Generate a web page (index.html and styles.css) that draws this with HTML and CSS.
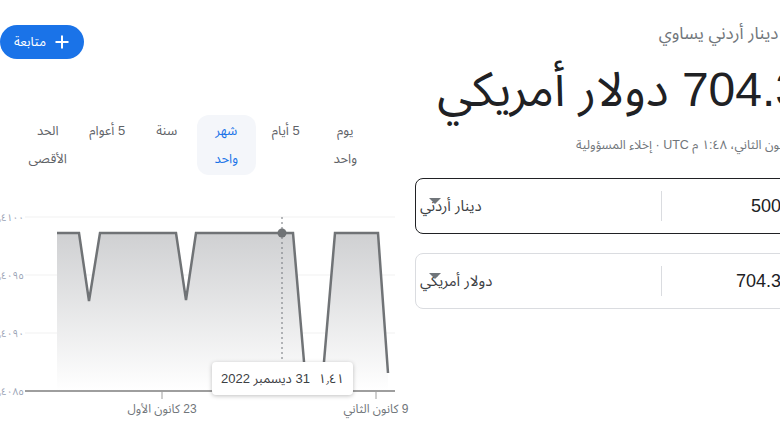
FILE: index.html
```html
<!DOCTYPE html>
<html lang="ar">
    <head>
        <meta charset="utf-8" />
        <title>محوّل العملات</title>
        <meta name="viewport" content="width=device-width, initial-scale=1" />
        <link rel="stylesheet" href="styles.css">
    </head>
    <body>
        <div class="page">
            <section class="chart_col">
                <button class="follow">
                    <svg width="16" height="16" viewBox="0 0 16 16"><path d="M8 1.5v13M1.5 8h13" stroke="#fff" stroke-width="2" fill="none"/></svg>
                    <span>متابعة</span>
                </button>

                <div class="ranges">
                    <div class="range">يوم واحد</div>
                    <div class="range">5 أيام</div>
                    <div class="range range_on">شهر واحد</div>
                    <div class="range">سنة</div>
                    <div class="range">5 أعوام</div>
                    <div class="range">الحد الأقصى</div>
                </div>

                <div class="chart">
                    <svg class="plot" width="400" height="237" viewBox="0 0 400 237">
                        <defs>
                            <linearGradient id="area" x1="0" y1="0" x2="0" y2="1">
                                <stop offset="0" stop-color="#cfd0d2"/>
                                <stop offset="1" stop-color="#ffffff"/>
                            </linearGradient>
                        </defs>
                        <!-- grid -->
                        <line class="grid" x1="25" y1="22" x2="395" y2="22"/>
                        <line class="grid" x1="25" y1="80" x2="395" y2="80"/>
                        <line class="grid" x1="25" y1="138" x2="395" y2="138"/>
                        <text class="ylab" x="24" y="25.5">١٫٤١٠٠</text>
                        <text class="ylab" x="24" y="83.5">١٫٤٠٩٥</text>
                        <text class="ylab" x="24" y="141.5">١٫٤٠٩٠</text>
                        <text class="ylab" x="24" y="199.5">١٫٤٠٨٥</text>

                        <!-- price -->
                        <path class="fill" d="M57 38 L79 38 L89 106 L100 38 L176 38 L186 105 L196 38 L293 38 L306 190 L322 190 L335 38 L378 38 L388 178 L388 196 L57 196 Z"/>
                        <path class="price" d="M57 38 L79 38 L89 106 L100 38 L176 38 L186 105 L196 38 L293 38 L306 190 L322 190 L335 38 L378 38 L388 178"/>

                        <line class="axis" x1="25" y1="196" x2="395" y2="196"/>
                        <line class="tick" x1="162" y1="196" x2="162" y2="204"/>
                        <line class="tick" x1="376" y1="196" x2="376" y2="204"/>
                        <text class="xlab" x="162" y="218">23 كانون الأول</text>
                        <text class="xlab" x="376" y="218">9 كانون الثاني</text>

                        <!-- hover -->
                        <line class="cursor" x1="282" y1="22" x2="282" y2="167"/>
                        <circle class="dot" cx="282" cy="38" r="4.5"/>
                    </svg>
                    <div class="tip"><span>١٫٤١</span><span>31 ديسمبر 2022</span></div>
                </div>
            </section>

            <section class="conv">
                <div class="from_label">50 دينار أردني يساوي</div>
                <div class="result">704.3 دولار أمريكي</div>
                <div class="stamp">9 كانون الثاني، ١:٤٨ م UTC · <span class="note">إخلاء المسؤولية</span></div>

                <div class="field field_on">
                    <div class="amount">500</div>
                    <div class="sep"></div>
                    <div class="pick">دينار أردني<span class="caret"></span></div>
                </div>
                <div class="field">
                    <div class="amount">704.3</div>
                    <div class="sep"></div>
                    <div class="pick">دولار أمريكي<span class="caret"></span></div>
                </div>
            </section>
        </div>
    </body>
</html>
```

FILE: styles.css
```css
body {
    margin: 0;
    overflow: hidden;
    background: #fff;
    font-family: "Liberation Sans", "Noto Sans Arabic", "Noto Naskh Arabic", "DejaVu Sans", sans-serif;
    color: #202124;
}
.page {
    display: flex;
    gap: 15px;
    width: 802px;
}
.chart_col {
    width: 400px;
    flex: none;
    padding-top: 25px;
}
.follow {
    display: flex;
    align-items: center;
    direction: rtl;
    gap: 8px;
    height: 34px;
    padding: 0 14px 0 14px;
    border: none;
    border-radius: 17px;
    background: #1a73e8;
    color: #fff;
    font-family: inherit;
    font-size: 13px;
}
.ranges {
    display: flex;
    direction: rtl;
    width: 357px;
    margin: 56px 0 0 18px;
}
.range {
    width: 59.5px;
    box-sizing: border-box;
    padding: 2px 9px;
    border-radius: 12px;
    text-align: center;
    font-size: 13px;
    line-height: 28px;
    color: #5f6368;
}
.range_on {
    background: #f4f6fa;
    color: #1a73e8;
}
.chart {
    position: relative;
    margin-top: 20px;
}
.plot {
    display: block;
    overflow: visible;
}
.grid {
    stroke: #f1f1f1;
    stroke-width: 1;
}
.axis {
    stroke: #9e9e9e;
    stroke-width: 2;
}
.tick {
    stroke: #9e9e9e;
    stroke-width: 1;
}
.ylab {
    font-size: 10px;
    fill: #9aa3b5;
    text-anchor: end;
}
.xlab {
    direction: rtl;
    font-size: 12px;
    fill: #70757a;
    text-anchor: middle;
}
.fill {
    fill: url(#area);
}
.price {
    fill: none;
    stroke: #707376;
    stroke-width: 2.5;
}
.cursor {
    stroke: #70757a;
    stroke-width: 1;
    stroke-dasharray: 2 3;
}
.dot {
    fill: #707376;
}
.tip {
    position: absolute;
    left: 212px;
    top: 167px;
    width: 141px;
    height: 33px;
    box-sizing: border-box;
    display: flex;
    direction: rtl;
    align-items: center;
    justify-content: space-between;
    gap: 6px;
    padding: 0 9px;
    background: #fff;
    border-radius: 4px;
    box-shadow: rgba(0, 0, 0, 0.25) 0 1px 4px;
    font-size: 13px;
    color: #3c4043;
    white-space: nowrap;
}
.conv {
    width: 387px;
    flex: none;
    direction: rtl;
    padding-top: 21px;
}
.from_label {
    font-size: 17px;
    line-height: 25px;
    color: #70757a;
    white-space: nowrap;
}
.result {
    margin-top: 16px;
    font-size: 48px;
    line-height: 56px;
    white-space: nowrap;
}
.stamp {
    margin-top: 19px;
    font-size: 12.5px;
    line-height: 16px;
    color: #70757a;
    white-space: nowrap;
}
.field {
    display: flex;
    align-items: center;
    height: 56px;
    box-sizing: border-box;
    margin-top: 25px;
    border: 1px solid #dadce0;
    border-radius: 8px;
}
.field + .field {
    margin-top: 19px;
}
.field_on {
    border-color: #202124;
}
.amount {
    width: 139px;
    box-sizing: border-box;
    padding-right: 20px;
    font-size: 18px;
    color: #202124;
}
.sep {
    width: 1px;
    height: 30px;
    background: #dadce0;
}
.pick {
    flex: 1;
    display: flex;
    justify-content: flex-end;
    position: relative;
    padding-left: 4px;
    font-size: 15px;
    color: #3c4043;
}
.caret {
    position: absolute;
    left: 13px;
    top: 8px;
    border-left: 6px solid transparent;
    border-right: 6px solid transparent;
    border-top: 6px solid #70757a;
}
```
